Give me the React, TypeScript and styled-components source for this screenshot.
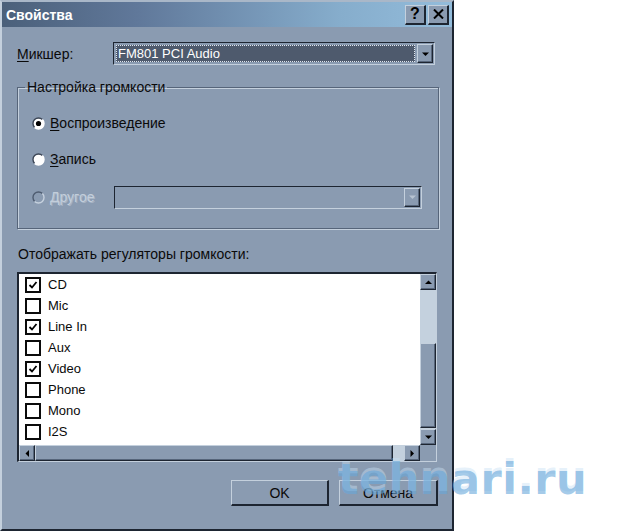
import * as React from 'react';
import styled, { createGlobalStyle } from 'styled-components';

const GlobalStyle = createGlobalStyle`
  html, body {
    margin: 0;
    padding: 0;
    background: #ffffff;
  }
  body {
    font-family: "Liberation Sans", Arial, sans-serif;
    font-size: 14px;
    color: #0a0a0a;
  }
`;

const BG = '#8a9bb1';
const LIGHT = '#c4d0dd';
const DARK = '#1d2531';
const SHADOW = '#56657a';

const Page = styled.div`
  position: relative;
  width: 640px;
  height: 531px;
  overflow: hidden;
  background: #ffffff;
`;

const Window = styled.div`
  box-sizing: border-box;
  width: 454px;
  height: 531px;
  background: ${BG};
  border-top: 2px solid #a9b7c8;
  border-left: 2px solid ${LIGHT};
  border-right: 2px solid ${DARK};
  border-bottom: 2px solid ${DARK};
  display: flex;
  flex-direction: column;
`;

const TitleBar = styled.div`
  height: 25px;
  display: flex;
  align-items: center;
  padding: 0 3px 0 4px;
  background: linear-gradient(90deg, #4b607a 0%, #60789a 30%, #86adcc 75%, #93bcdb 100%);
`;

const Title = styled.div`
  flex: 1;
  color: #ffffff;
  font-weight: bold;
  font-size: 14px;
`;

const CaptionButton = styled.div`
  box-sizing: border-box;
  width: 21px;
  height: 20px;
  margin-left: 2px;
  background: ${BG};
  border-top: 1px solid ${LIGHT};
  border-left: 1px solid ${LIGHT};
  border-right: 2px solid ${DARK};
  border-bottom: 2px solid ${DARK};
  display: flex;
  align-items: center;
  justify-content: center;
  font-weight: bold;
  font-size: 16px;
  color: #000;
`;

const Content = styled.div`
  display: flex;
  flex-direction: column;
  padding: 0 14px 0 15px;
`;

const MixerRow = styled.div`
  display: flex;
  align-items: center;
  margin-top: 15px;
  height: 23px;
`;

const Label = styled.span`
  width: 96px;
`;

const U = styled.span`
  text-decoration: underline;
  text-underline-offset: 2px;
`;

const Combo = styled.div<{ $disabled?: boolean }>`
  box-sizing: border-box;
  width: ${(p) => (p.$disabled ? '308px' : '322px')};
  height: 23px;
  display: flex;
  border-top: 1px solid ${DARK};
  border-left: 1px solid ${DARK};
  border-right: 1px solid ${LIGHT};
  border-bottom: 1px solid ${LIGHT};
  background: ${BG};
  padding: 1px;
`;

const ComboField = styled.div`
  flex: 1;
  margin: 1px 2px 1px 1px;
  background: #4e5a6d;
  color: #ffffff;
  border: 1px dotted #e0e6ee;
  display: flex;
  align-items: center;
  padding-left: 1px;
  font-size: 13px;
`;

const EmptyField = styled.div`
  flex: 1;
`;

const ArrowButton = styled.div<{ $w?: number; $h?: number }>`
  box-sizing: border-box;
  width: ${(p) => p.$w ?? 16}px;
  height: ${(p) => p.$h ?? 16}px;
  background: ${BG};
  border-top: 1px solid ${LIGHT};
  border-left: 1px solid ${LIGHT};
  border-right: 1px solid ${DARK};
  border-bottom: 1px solid ${DARK};
  box-shadow: inset -1px -1px 0 ${SHADOW};
  display: flex;
  align-items: center;
  justify-content: center;
  flex-shrink: 0;
`;

const ComboArrow = styled(ArrowButton)`
  height: 100%;
`;

const Group = styled.fieldset`
  box-sizing: border-box;
  margin: 14px 0 0 0;
  width: 422px;
  height: 150px;
  padding: 0;
  border: 1px solid ${SHADOW};
  box-shadow: 1px 1px 0 ${LIGHT}, inset 1px 1px 0 ${LIGHT};
`;

const Legend = styled.legend`
  margin-left: 7px;
  padding: 0 2px;
  font-size: 14px;
`;

const RadioList = styled.div`
  display: flex;
  flex-direction: column;
  padding: 16px 16px 0 14px;
`;

const RadioRow = styled.div<{ $disabled?: boolean; $gap: number }>`
  display: flex;
  align-items: center;
  height: 24px;
  margin-top: ${(p) => p.$gap}px;
  color: ${(p) => (p.$disabled ? '#c3cedb' : '#0a0a0a')};
  text-shadow: ${(p) => (p.$disabled ? '1px 1px 0 #a7b5c6' : 'none')};
`;

const RadioText = styled.span`
  margin-left: 5px;
`;

const OtherCombo = styled.div`
  margin-left: auto;
  display: flex;
`;

const ListLabel = styled.div`
  margin-top: 17px;
  padding-left: 1px;
  height: 16px;
  line-height: 16px;
`;

const ListBox = styled.div`
  box-sizing: border-box;
  margin-top: 10px;
  width: 420px;
  height: 190px;
  border-top: 2px solid ${DARK};
  border-left: 2px solid ${DARK};
  border-right: 1px solid ${LIGHT};
  border-bottom: 1px solid ${LIGHT};
  display: grid;
  grid-template-columns: 1fr 16px;
  grid-template-rows: 1fr 16px;
`;

const Items = styled.div`
  background: #ffffff;
  padding: 0 0 0 6px;
  display: flex;
  flex-direction: column;
`;

const Item = styled.div`
  display: flex;
  align-items: center;
  height: 21px;
`;

const Box = styled.div`
  box-sizing: border-box;
  width: 16px;
  height: 16px;
  border: 2px solid #0b0b0b;
  background: #ffffff;
  display: flex;
  align-items: center;
  justify-content: center;
`;

const ItemText = styled.span`
  margin-left: 7px;
  font-size: 13px;
`;

const VScroll = styled.div`
  display: flex;
  flex-direction: column;
  background: #c4d1de;
`;

const HScroll = styled.div`
  display: flex;
  background: #c4d1de;
`;

const Thumb = styled.div<{ $size: number; $vertical?: boolean }>`
  box-sizing: border-box;
  ${(p) => (p.$vertical ? `height: ${p.$size}px;` : `width: ${p.$size}px;`)}
  background: ${BG};
  border-top: 1px solid ${LIGHT};
  border-left: 1px solid ${LIGHT};
  border-right: 1px solid ${DARK};
  border-bottom: 1px solid ${DARK};
  box-shadow: inset -1px -1px 0 ${SHADOW};
`;

const Track = styled.div<{ $size?: number }>`
  flex: ${(p) => (p.$size ? `0 0 ${p.$size}px` : '1')};
`;

const Corner = styled.div`
  background: ${BG};
`;

const Buttons = styled.div`
  display: flex;
  gap: 10px;
  margin-top: 18px;
  padding-left: 214px;
`;

const Button = styled.div<{ $w: number }>`
  box-sizing: border-box;
  width: ${(p) => p.$w}px;
  height: 26px;
  background: ${BG};
  border-top: 1px solid ${LIGHT};
  border-left: 1px solid ${LIGHT};
  border-right: 2px solid ${DARK};
  border-bottom: 2px solid ${DARK};
  display: flex;
  align-items: center;
  justify-content: center;
  font-size: 14px;
`;

const Watermark = styled.div`
  position: absolute;
  left: 338px;
  top: 454px;
  font-family: "DejaVu Sans", sans-serif;
  font-weight: bold;
  font-size: 43px;
  letter-spacing: 0.5px;
  color: rgba(104, 168, 218, 0.6);
  text-shadow: 0 -3px 0 rgba(200, 225, 245, 0.45);
  pointer-events: none;
`;

const Tri = ({ dir, color = '#000' }: { dir: 'up' | 'down' | 'left' | 'right'; color?: string }) => {
  const pts = {
    up: '0,4 7,4 3.5,0.5',
    down: '0,0.5 7,0.5 3.5,4',
    left: '4,0 4,7 0.5,3.5',
    right: '0.5,0 0.5,7 4,3.5',
  }[dir];
  const vertical = dir === 'up' || dir === 'down';
  return (
    <svg width={vertical ? 7 : 4} height={vertical ? 4 : 7} viewBox={vertical ? '0 0 7 4' : '0 0 4 7'}>
      <polygon points={pts} fill={color} />
    </svg>
  );
};

const Radio = ({ checked, disabled }: { checked?: boolean; disabled?: boolean }) => (
  <svg width="13" height="13" viewBox="0 0 13 13">
    <circle cx="6.5" cy="6.5" r="5.5" fill={disabled ? 'none' : '#ffffff'} />
    <path d="M 2.6 10.4 A 5.5 5.5 0 0 1 10.4 2.6" fill="none" stroke={disabled ? '#4e5c70' : '#3c4656'} strokeWidth="1.4" />
    <path d="M 10.4 2.6 A 5.5 5.5 0 0 1 2.6 10.4" fill="none" stroke={disabled ? '#c6d1de' : '#ffffff'} strokeWidth="1.4" />
    {checked && <circle cx="6.5" cy="6.5" r="2.6" fill="#000" />}
  </svg>
);

const Check = () => (
  <svg width="10" height="10" viewBox="0 0 10 10">
    <polyline points="1.5,5 4,7.5 8.5,2" fill="none" stroke="#000" strokeWidth="1.8" />
  </svg>
);

const items: [string, boolean][] = [
  ['CD', true],
  ['Mic', false],
  ['Line In', true],
  ['Aux', false],
  ['Video', true],
  ['Phone', false],
  ['Mono', false],
  ['I2S', false],
];

export default function App() {
  return (
    <Page>
      <GlobalStyle />
      <Window>
        <TitleBar>
          <Title>Свойства</Title>
          <CaptionButton>?</CaptionButton>
          <CaptionButton>
            <svg width="11" height="10" viewBox="0 0 11 10">
              <path d="M1 0.5 L10 9.5 M10 0.5 L1 9.5" stroke="#000" strokeWidth="2" />
            </svg>
          </CaptionButton>
        </TitleBar>
        <Content>
          <MixerRow>
            <Label>
              <U>М</U>икшер:
            </Label>
            <Combo>
              <ComboField>FM801 PCI Audio</ComboField>
              <ComboArrow $w={16}>
                <Tri dir="down" />
              </ComboArrow>
            </Combo>
          </MixerRow>

          <Group>
            <Legend>Настройка громкости</Legend>
            <RadioList>
              <RadioRow $gap={0}>
                <Radio checked />
                <RadioText>
                  <U>В</U>оспроизведение
                </RadioText>
              </RadioRow>
              <RadioRow $gap={12}>
                <Radio />
                <RadioText>
                  <U>З</U>апись
                </RadioText>
              </RadioRow>
              <RadioRow $gap={14} $disabled>
                <Radio disabled />
                <RadioText>
                  <U>Д</U>ругое
                </RadioText>
                <OtherCombo>
                  <Combo $disabled>
                    <EmptyField />
                    <ComboArrow $w={16}>
                      <Tri dir="down" color="#b7c3d1" />
                    </ComboArrow>
                  </Combo>
                </OtherCombo>
              </RadioRow>
            </RadioList>
          </Group>

          <ListLabel>Отображать регуляторы громкости:</ListLabel>
          <ListBox>
            <Items>
              {items.map(([name, on]) => (
                <Item key={name}>
                  <Box>{on && <Check />}</Box>
                  <ItemText>{name}</ItemText>
                </Item>
              ))}
            </Items>
            <VScroll>
              <ArrowButton>
                <Tri dir="up" />
              </ArrowButton>
              <Track $size={53} />
              <Thumb $vertical $size={85} />
              <Track />
              <ArrowButton>
                <Tri dir="down" />
              </ArrowButton>
            </VScroll>
            <HScroll>
              <ArrowButton>
                <Tri dir="left" />
              </ArrowButton>
              <Thumb $size={358} />
              <Track />
              <ArrowButton>
                <Tri dir="right" />
              </ArrowButton>
            </HScroll>
            <Corner />
          </ListBox>

          <Buttons>
            <Button $w={98}>OK</Button>
            <Button $w={99}>Отмена</Button>
          </Buttons>
        </Content>
      </Window>
      <Watermark>tehnari.ru</Watermark>
    </Page>
  );
}
